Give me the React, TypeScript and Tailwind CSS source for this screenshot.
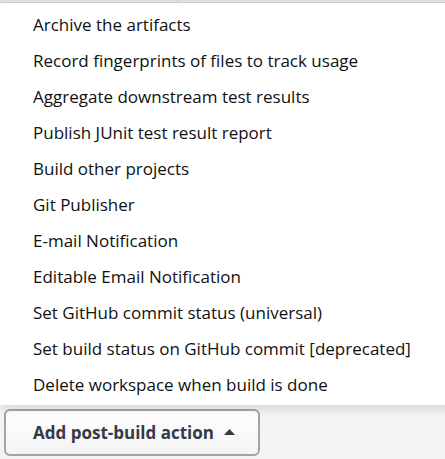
const ITEMS = [
  "Archive the artifacts",
  "Record fingerprints of files to track usage",
  "Aggregate downstream test results",
  "Publish JUnit test result report",
  "Build other projects",
  "Git Publisher",
  "E-mail Notification",
  "Editable Email Notification",
  "Set GitHub commit status (universal)",
  "Set build status on GitHub commit [deprecated]",
  "Delete workspace when build is done",
];

export default function App() {
  return (
    <div className="relative w-[445px] h-[459px] overflow-hidden bg-[#f4f4f4] font-['Open_Sans',sans-serif]">
      {/* strip of the page behind the menu */}
      <div className="flex h-[3px] bg-[#e2e2e2] border-b border-[#d2d2d2]">
        <div className="w-[178px] border-r border-[#cfcfcf]" />
      </div>

      {/* dropdown menu */}
      <ul className="relative z-10 w-[460px] bg-white pt-1 pb-0.5 shadow-[0_4px_10px_rgba(0,0,0,0.12)]">
        {ITEMS.map((item) => (
          <li
            key={item}
            className="h-9 pl-[33px] leading-9 text-[17px] text-[#111] whitespace-nowrap cursor-pointer hover:bg-[#f0f4f8]"
          >
            {item}
          </li>
        ))}
      </ul>

      {/* trigger button */}
      <div className="pl-1 pt-1">
        <button
          type="button"
          className="flex items-center gap-2.5 w-[256px] h-[47px] pl-[27px] rounded-md border-2 border-[#9ea6ad] bg-gradient-to-b from-white to-[#f3f3f3] text-[17px] font-bold text-[#333b45]"
        >
          Add post-build action
          <svg width="11" height="6" viewBox="0 0 11 6" className="mt-[-1px]">
            <path d="M0 6 L5.5 0 L11 6 Z" fill="#333b45" />
          </svg>
        </button>
      </div>
    </div>
  );
}
